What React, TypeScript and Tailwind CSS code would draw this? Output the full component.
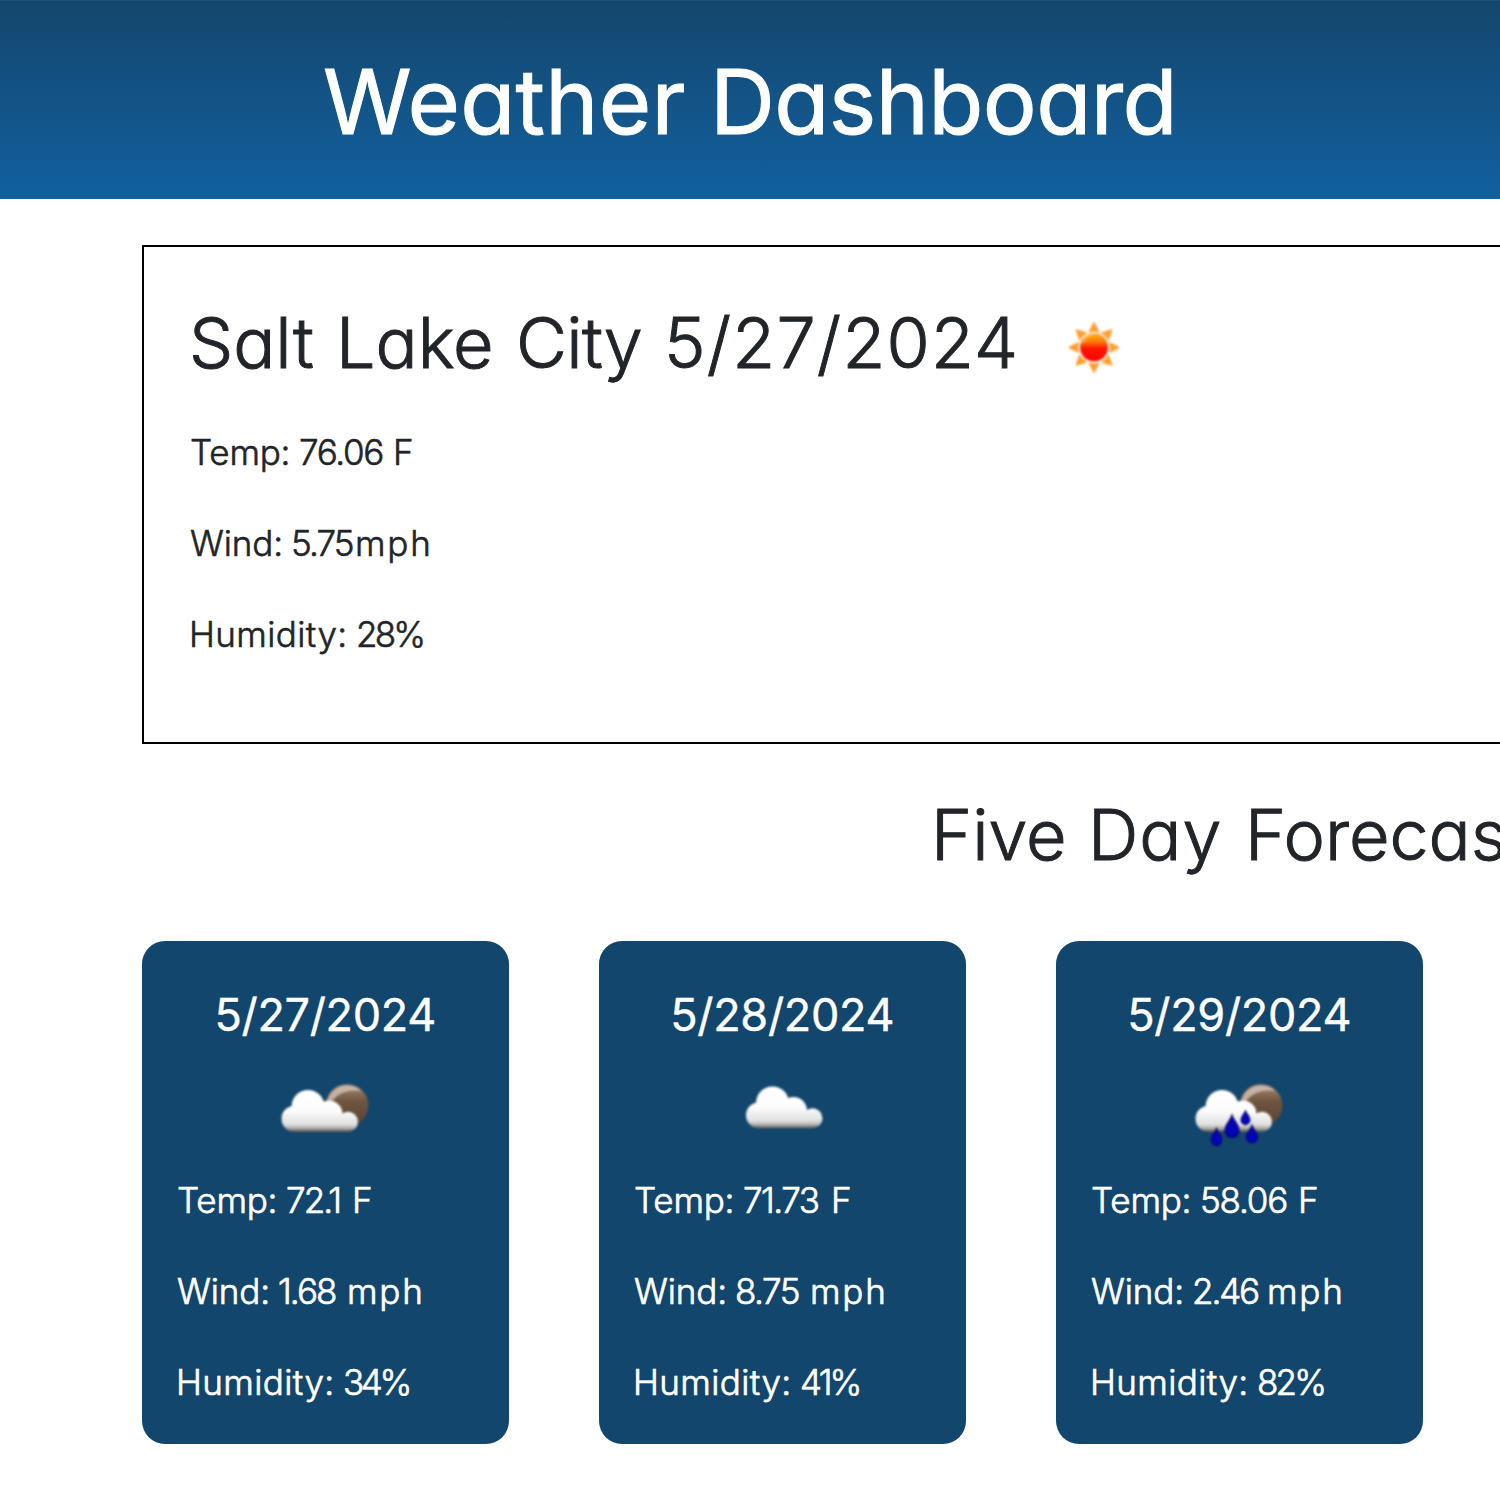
type Word = { text: string; className?: string };
type Day = { date: string; icon: "broken" | "cloudy" | "rain"; lines: Word[][] };

function Words({ words }: { words: Word[] }) {
  return (
    <>
      {words.map((w, i) => (
        <span key={i} className={`inline-block whitespace-nowrap ${w.className ?? ""}`}>
          {w.text}
        </span>
      ))}
    </>
  );
}

const temp: Word = { text: "Temp:", className: "w-[109px] tracking-[-0.2px]" };
const wind: Word = { text: "Wind:", className: "w-[101px] tracking-[-0.1px]" };
const humidity: Word = { text: "Humidity:", className: "-ml-[1px] w-[167px] tracking-[0.4px]" };
const fahrenheit: Word = { text: "F", className: "tracking-normal" };
const mph: Word = { text: "mph", className: "tracking-[1.8px]" };

const current: Word[][] = [
  [temp, { text: "76.06", className: "w-[94px] tracking-[-1.3px]" }, fahrenheit],
  [wind, { text: "5.75", className: "w-[64px] tracking-[-1.9px]" }, mph],
  [humidity, { text: "28%", className: "tracking-[-2.8px]" }],
];

const days: Day[] = [
  {
    date: "5/27/2024",
    icon: "broken",
    lines: [
      [temp, { text: "72.1", className: "w-[66px] tracking-[-1.9px]" }, fahrenheit],
      [wind, { text: "1.68", className: "w-[69px] tracking-[-1.9px]" }, mph],
      [humidity, { text: "34%", className: "tracking-[-3.4px]" }],
    ],
  },
  {
    date: "5/28/2024",
    icon: "cloudy",
    lines: [
      [temp, { text: "71.73", className: "w-[88px] tracking-[-1.5px]" }, fahrenheit],
      [wind, { text: "8.75", className: "w-[75px] tracking-[-1.5px]" }, mph],
      [humidity, { text: "41%", className: "tracking-[-2.8px]" }],
    ],
  },
  {
    date: "5/29/2024",
    icon: "rain",
    lines: [
      [temp, { text: "58.06", className: "w-[98px] tracking-[-1.2px]" }, fahrenheit],
      [wind, { text: "2.46", className: "w-[75px] tracking-[-2.1px]" }, mph],
      [humidity, { text: "82%", className: "tracking-[-2.8px]" }],
    ],
  },
];

function Sun() {
  return (
    <svg width="100" height="100" viewBox="0 0 100 100" className="shrink-0 blur-[0.8px]">
      <defs>
        <linearGradient id="sun" x1="0" y1="0" x2="0" y2="1">
          <stop offset="0" stopColor="#ffb013" />
          <stop offset="0.3" stopColor="#ff7a08" />
          <stop offset="0.55" stopColor="#fb1500" />
          <stop offset="1" stopColor="#ff0000" />
        </linearGradient>
      </defs>
      {[0, 45, 90, 135, 180, 225, 270, 315].map((a) => (
        <path
          key={a}
          d="M50 22.8 L54.6 31.7 Q50 30 45.4 31.7 Z"
          fill="#ff9c24"
          stroke="#ffa43c"
          strokeWidth="1.6"
          strokeLinejoin="round"
          transform={`rotate(${a} 50 47.5)`}
        />
      ))}
      <circle cx="50" cy="47.3" r="14.8" fill="#ffe0e0" />
      <circle cx="50" cy="47.3" r="13.9" fill="url(#sun)" />
      <path d="M39 43 Q42 35.5 49 35" fill="none" stroke="#ffd27a" strokeWidth="1.6" opacity="0.7" />
    </svg>
  );
}

const DROP = "M0 -11 C1.5 -6 7 -2 7 4 A7 7 0 0 1 -7 4 C-7 -2 -1.5 -6 0 -11 Z";

function CardIcon({ kind }: { kind: Day["icon"] }) {
  return (
    <svg width="120" height="100" viewBox="0 0 120 100" className="mx-auto blur-[0.8px]">
      <defs>
        <linearGradient id={`cloud-${kind}`} gradientUnits="userSpaceOnUse" x1="0" y1="30" x2="0" y2="72">
          <stop offset="0" stopColor="#ffffff" />
          <stop offset="0.5" stopColor="#fcfcfc" />
          <stop offset="0.82" stopColor="#e0e0e0" />
          <stop offset="0.9" stopColor="#b8b6b4" />
          <stop offset="1" stopColor="#5d5650" />
        </linearGradient>
        <linearGradient id={`moon-${kind}`} x1="0" y1="0" x2="0" y2="1">
          <stop offset="0" stopColor="#a58c7a" />
          <stop offset="0.4" stopColor="#705540" />
          <stop offset="1" stopColor="#5a4330" />
        </linearGradient>
      </defs>
      {kind !== "cloudy" && (
        <g>
          <circle cx="81" cy="45.5" r="21.3" fill={`url(#moon-${kind})`} />
          <path d="M61 41 A20.5 20.5 0 0 1 95 31 Q76 28 66 41 Z" fill="#d8c6bb" opacity="0.75" />
        </g>
      )}
      <g fill={`url(#cloud-${kind})`} transform={kind === "cloudy" ? "translate(7.5 -3.5)" : undefined}>
        <circle cx="42" cy="46.5" r="16.5" />
        <circle cx="28.5" cy="58.7" r="13" />
        <circle cx="63" cy="54" r="13.5" />
        <circle cx="82" cy="61.8" r="10" />
        <path d="M28 71.7 V52 H70 L76 58 H82 V71.8 Z" />
      </g>
      {kind === "rain" && (
        <g fill="#0404b8" stroke="#06066b" strokeWidth="1.4">
          <path d={DROP} transform="translate(52 66.5)" />
          <path d={DROP} transform="translate(65.5 57.5) scale(0.65)" />
          <path d={DROP} transform="translate(36.5 77) scale(0.78)" />
          <path d={DROP} transform="translate(72 74) scale(0.8)" />
        </g>
      )}
    </svg>
  );
}

export default function App() {
  return (
    <div className="h-[1500px] w-[1500px] overflow-hidden bg-white font-['Inter',sans-serif] font-light text-[#212529] [font-feature-settings:'cv11']">
      <header className="flex h-[199px] items-center justify-center border-t border-[#1c527a] bg-linear-to-b from-[#13476d] to-[#1260a0] pt-[3px] text-white">
        <h1 className="text-[90px] leading-none font-normal whitespace-nowrap [-webkit-text-stroke:1px_white]">
          <Words
            words={[
              { text: "Weather", className: "w-[387px] tracking-[0.3px]" },
              { text: "Dashboard", className: "tracking-[-0.6px]" },
            ]}
          />
        </h1>
      </header>

      <main className="mt-[46px] ml-[142px] w-[2198px]">
        <section className="h-[499px] border-2 border-black pt-[54px] pl-[45px]">
          <div className="flex h-[84px] items-center">
            <h2 className="text-[70px] leading-[84px] whitespace-nowrap [-webkit-text-stroke:1px_#212529]">
              <Words
                words={[
                  { text: "Salt", className: "w-[147px]" },
                  { text: "Lake", className: "w-[180px]" },
                  { text: "City", className: "w-[148px] tracking-[-0.6px]" },
                  { text: "5/27/2024", className: "w-[380px] tracking-[1.2px]" },
                ]}
              />
            </h2>
            <div className="pt-[13px]">
              <Sun />
            </div>
          </div>
          <div className="mt-[40px] flex flex-col gap-[37px] pl-[1px] text-[35px] leading-[54px] [-webkit-text-stroke:0.6px_#212529]">
            {current.map((line, i) => (
              <p key={i}>
                <Words words={line} />
              </p>
            ))}
          </div>
        </section>

        <h2 className="mt-[49px] pl-[789px] text-[70px] leading-[84px] whitespace-nowrap [-webkit-text-stroke:1px_#212529]">
          <Words
            words={[
              { text: "Five", className: "w-[157px]" },
              { text: "Day", className: "w-[157px] tracking-[1px]" },
              { text: "Forecast" },
            ]}
          />
        </h2>

        <section className="mt-[64px] flex gap-[90.5px]">
          {days.map((d) => (
            <article key={d.date} className="h-[503px] w-[366.5px] rounded-[23px] bg-[#13466c] pt-[47px] text-white">
              <h3 className="text-center text-[45px] leading-[54px] font-normal tracking-[-0.3px] [-webkit-text-stroke:0.4px_white]">
                {d.date}
              </h3>
              <div className="pt-[18px] pl-px">
                <CardIcon kind={d.icon} />
              </div>
              <div className="mt-[13px] flex flex-col gap-[37px] pl-[35px] text-[35px] leading-[54px] [-webkit-text-stroke:0.7px_white]">
                {d.lines.map((line, i) => (
                  <p key={i}>
                    <Words words={line} />
                  </p>
                ))}
              </div>
            </article>
          ))}
        </section>
      </main>
    </div>
  );
}
